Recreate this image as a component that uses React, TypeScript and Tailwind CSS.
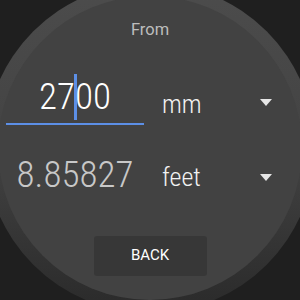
const condensed = "font-['Roboto_Condensed','Roboto',sans-serif] [font-stretch:condensed]"

function Caret() {
  return (
    <svg width="12" height="7" viewBox="0 0 12 7" className="shrink-0">
      <path d="M0 0 L12 0 L6 7 Z" fill="#e6e6e6" />
    </svg>
  )
}

export default function App() {
  return (
    <div className="w-[300px] h-[300px] overflow-hidden bg-[#1f1f1f] flex items-center justify-center font-['Roboto',sans-serif]">
      {/* bezel */}
      <div className="w-[330px] h-[330px] shrink-0 rounded-full bg-gradient-to-b from-[#4c4c4c] via-[#434343] to-[#2a2a2a] flex items-center justify-center mb-[4px]">
        {/* face */}
        <div className="w-[304px] h-[304px] shrink-0 rounded-full bg-[#424242] flex flex-col pt-[26px]">
          <div className="font-['Roboto',sans-serif] font-normal text-center text-[16.5px] leading-[16px] text-[#bdbdbd]">
            From
          </div>

          {/* value row */}
          <div className="flex items-start mt-[36px] pl-[8px] pr-[30px]">
            <div className="w-[138px] flex flex-col">
              <div className={`${condensed} text-center text-[37px] leading-[46px] font-light text-white`}>
                27
                <span className="inline-block align-top w-[3px] h-[46px] -mx-[1.5px] bg-[#5c8fe6]" />
                00
              </div>
              <div className="mt-[2.5px] h-[2px] bg-[#5c8fe6]" />
            </div>
            <div className={`${condensed} ml-[18px] flex-1 mt-[17px] text-[26px] leading-[27px] font-light text-[#f2f2f2]`}>
              mm
            </div>
            <div className="mt-[25px]">
              <Caret />
            </div>
          </div>

          {/* result row */}
          <div className="flex items-start mt-[27px] pl-[8px] pr-[30px]">
            <div className={`${condensed} w-[138px] text-center text-[37px] leading-[46px] font-light text-[#c8c8c8]`}>
              8.85827
            </div>
            <div className={`${condensed} ml-[18px] flex-1 mt-[12px] text-[26px] leading-[27px] font-light text-[#f2f2f2]`}>
              feet
            </div>
            <div className="mt-[22px]">
              <Caret />
            </div>
          </div>

          <div className="flex justify-center mt-[38px]">
            <button className="w-[113px] h-[40px] rounded-[3px] bg-[#373737] text-white font-['Roboto',sans-serif] text-[15px] font-normal">
              BACK
            </button>
          </div>
        </div>
      </div>
    </div>
  )
}
